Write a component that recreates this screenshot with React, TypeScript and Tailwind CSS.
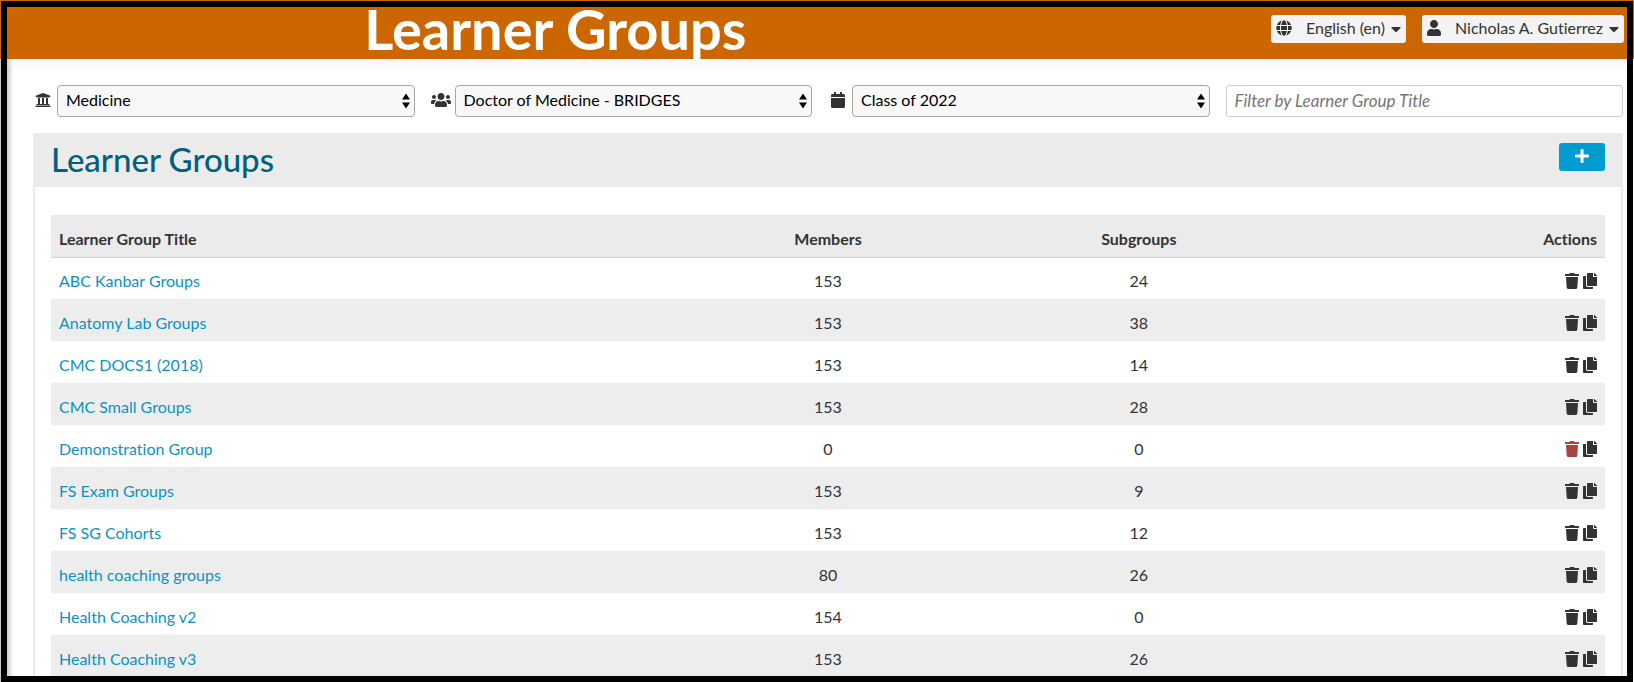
import type { ReactNode } from 'react';
import {
  FaCalendar,
  FaCaretDown,
  FaCopy,
  FaGlobe,
  FaPlus,
  FaTrash,
  FaUniversity,
  FaUser,
  FaUsers,
} from 'react-icons/fa';

interface Group {
  title: string;
  members: number;
  subgroups: number;
}

const groups: Group[] = [
  { title: 'ABC Kanbar Groups', members: 153, subgroups: 24 },
  { title: 'Anatomy Lab Groups', members: 153, subgroups: 38 },
  { title: 'CMC DOCS1 (2018)', members: 153, subgroups: 14 },
  { title: 'CMC Small Groups', members: 153, subgroups: 28 },
  { title: 'Demonstration Group', members: 0, subgroups: 0 },
  { title: 'FS Exam Groups', members: 153, subgroups: 9 },
  { title: 'FS SG Cohorts', members: 153, subgroups: 12 },
  { title: 'health coaching groups', members: 80, subgroups: 26 },
  { title: 'Health Coaching v2', members: 154, subgroups: 0 },
  { title: 'Health Coaching v3', members: 153, subgroups: 26 },
];

function HeaderButton({ icon, label }: { icon: ReactNode; label: string }) {
  return (
    <button
      type="button"
      className="flex h-7 items-center rounded-[3px] bg-[#f3f3f3] px-[5px] pb-[2px] whitespace-nowrap text-[#333]"
    >
      {icon}
      <span className="ml-[14px]">{label}</span>
      <FaCaretDown className="mt-[2px] ml-[6px] h-4 w-[10px]" />
    </button>
  );
}

function FilterSelect({ id, label, icon, value }: { id: string; label: string; icon: ReactNode; value: string }) {
  return (
    <div className="flex items-center pr-4">
      <label htmlFor={id} aria-label={label} className="flex w-6 shrink-0 justify-center pr-1 pb-[2px] text-[#333]">
        {icon}
      </label>
      <div className="relative flex-1">
        <select
          id={id}
          className="block h-8 w-full appearance-none rounded-[4px] border border-[#a6a6a6] bg-[#f8f8f8] px-2 pb-[2px] text-black"
        >
          <option>{value}</option>
        </select>
        <svg
          viewBox="0 0 8 15"
          className="pointer-events-none absolute top-1/2 right-[5px] h-[15px] w-2 -translate-y-1/2"
          aria-hidden="true"
        >
          <path d="M4 0 8 6H0zM4 15 0 9h8z" />
        </svg>
      </div>
    </div>
  );
}

function GroupRow({ group }: { group: Group }) {
  return (
    <tr className="h-[42px] even:bg-[#ededed]">
      <td className="px-2 pt-[11px] pb-[5px]">
        <a href="#group" className="text-[#0a93c4]">
          {group.title}
        </a>
      </td>
      <td className="px-2 pt-[11px] pb-[5px] text-center">{group.members}</td>
      <td className="px-2 pt-[11px] pb-[5px] text-center">{group.subgroups}</td>
      <td className="px-2 pt-[11px] pb-[5px]">
        <div className="flex justify-end gap-1">
          <button
            type="button"
            aria-label="Remove"
            className={group.members === 0 ? 'text-[#a9443f]' : 'text-[#333]'}
          >
            <FaTrash className="h-4 w-[14px]" />
          </button>
          <button type="button" aria-label="Copy">
            <FaCopy className="h-4 w-[14px]" />
          </button>
        </div>
      </td>
    </tr>
  );
}

export default function App() {
  return (
    <div className="flex h-screen flex-col bg-white font-[Lato,sans-serif] text-[16px] leading-6 text-[#333] [font-variant-ligatures:none]">
      <header className="grid h-[59px] shrink-0 grid-cols-3 items-start bg-[#cc6600] pr-[10px]">
        <h1 className="col-span-2 pl-7 text-center text-[56px] leading-[57px] font-bold text-white">
          Learner Groups
        </h1>
        <div className="flex justify-end gap-4 pt-[15px]">
          <HeaderButton icon={<FaGlobe className="size-4" />} label="English (en)" />
          <HeaderButton icon={<FaUser className="h-4 w-[14px]" />} label="Nicholas A. Gutierrez" />
        </div>
      </header>

      <div className="flex min-h-0 flex-1 overflow-hidden">
        <div className="w-[13px] shrink-0 bg-linear-to-r from-[#c8c8c8] from-50% to-[#fafafa]" />
        <main className="min-w-0 flex-1">
          <div className="h-[10px] bg-[#fafafa]" />
          <div className="pt-4 pr-[11px] pl-5">
            <div className="grid grid-cols-4">
              <FilterSelect id="school" label="School" icon={<FaUniversity className="size-4" />} value="Medicine" />
              <FilterSelect
                id="program"
                label="Program"
                icon={<FaUsers className="size-5" />}
                value="Doctor of Medicine - BRIDGES"
              />
              <FilterSelect id="cohort" label="Cohort" icon={<FaCalendar className="size-4" />} value="Class of 2022" />
              <input
                type="text"
                aria-label="Filter by Learner Group Title"
                placeholder="Filter by Learner Group Title"
                className="h-8 w-full rounded-[3px] border border-[#ccc] bg-white px-2 pb-[2px] text-[17px] placeholder:text-[#757575] placeholder:italic"
              />
            </div>

            <section className="mt-4 border-x-2 border-[#ebebeb]">
              <div className="flex h-[54px] items-start justify-between bg-[#ebebeb] px-4">
                <h2 className="text-[33px] leading-[52px] font-medium text-[#006080]">Learner Groups</h2>
                <button
                  type="button"
                  aria-label="New learner group"
                  className="mt-[10px] flex h-7 w-[46px] items-center justify-center rounded-[3px] bg-[#009bcf] pb-[2px] text-white"
                >
                  <FaPlus className="size-4" />
                </button>
              </div>
              <div className="px-4 pt-7">
                <table className="w-full table-fixed border-collapse">
                  <thead>
                    <tr className="h-[42px] border-b border-[#d2d2d2] bg-[#ebebeb]">
                      <th className="w-2/5 px-2 pt-[11px] pb-[5px] text-left">Learner Group Title</th>
                      <th className="w-1/5 px-2 pt-[11px] pb-[5px] text-center">Members</th>
                      <th className="w-1/5 px-2 pt-[11px] pb-[5px] text-center">Subgroups</th>
                      <th className="w-1/5 px-2 pt-[11px] pb-[5px] text-right">Actions</th>
                    </tr>
                  </thead>
                  <tbody>
                    {groups.map((group) => (
                      <GroupRow key={group.title} group={group} />
                    ))}
                  </tbody>
                </table>
              </div>
            </section>
          </div>
        </main>
      </div>

      <div className="pointer-events-none fixed top-px right-px bottom-0 left-px border-[6px] border-black" />
    </div>
  );
}
